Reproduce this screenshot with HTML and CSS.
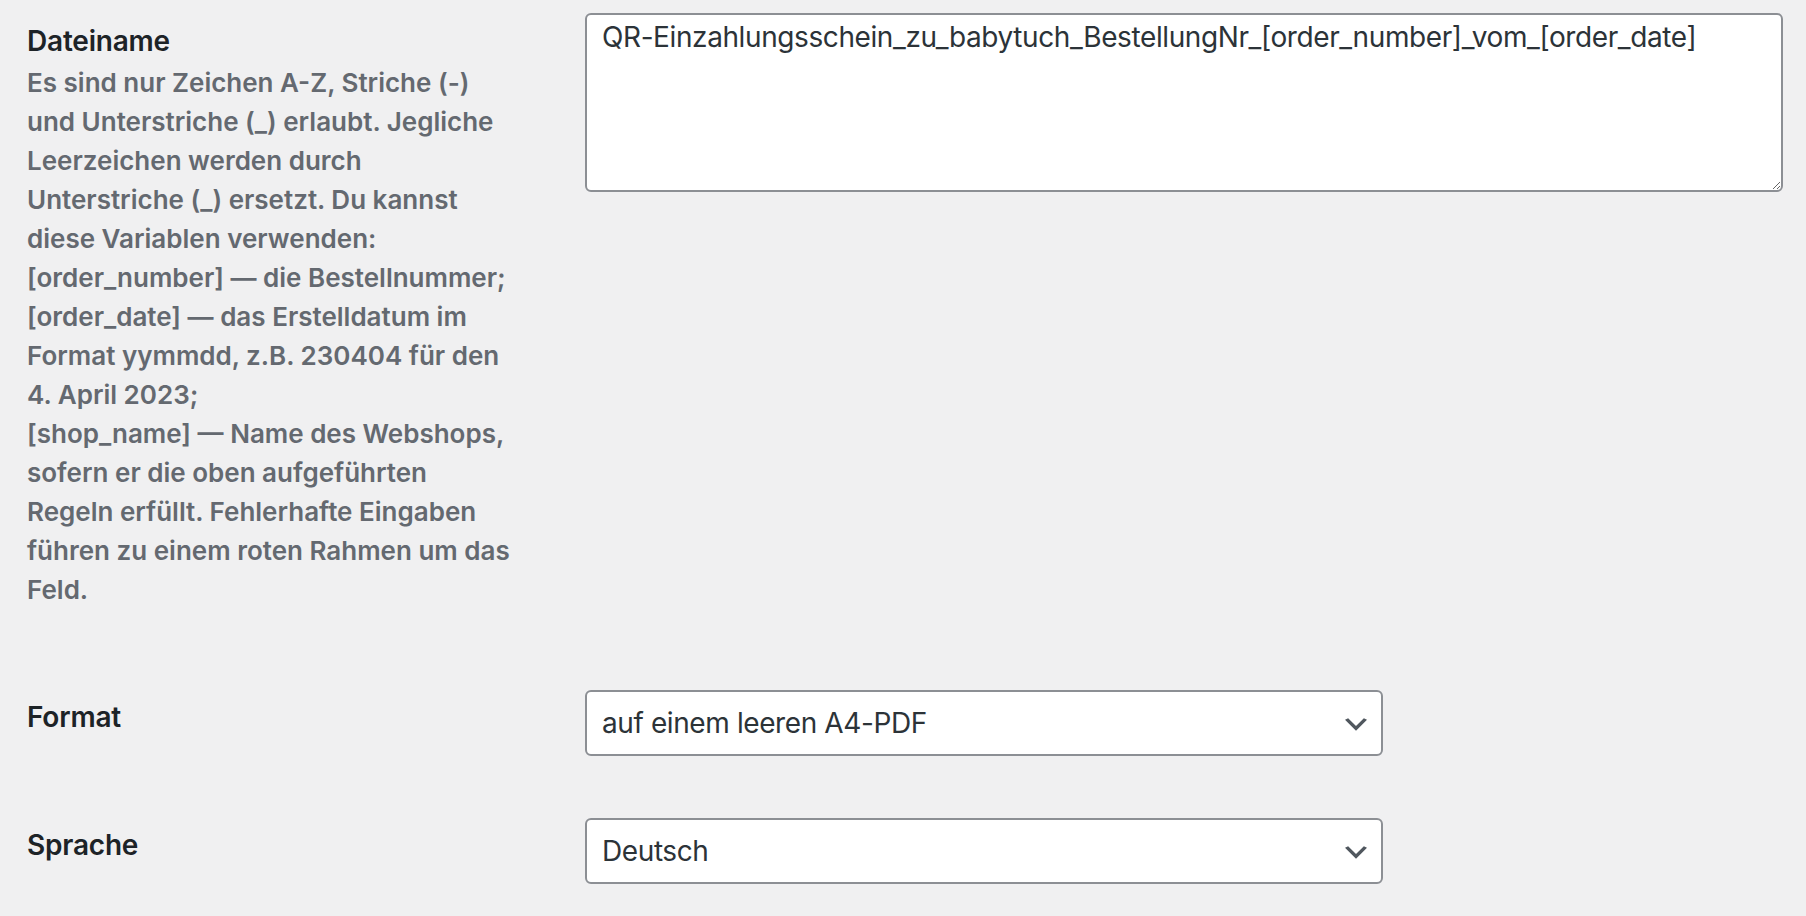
FILE: index.html
```html
<!DOCTYPE html>
<html lang="de">
<head>
<meta charset="utf-8">
<title>Einstellungen</title>
<link rel="stylesheet" href="styles.css">
</head>
<body>
<form class="settings">
  <div class="row row-first">
    <div class="row-label">
      <label class="field-label" for="filename">Dateiname</label>
      <p class="description">Es sind nur Zeichen A-Z, Striche (-)<br>und Unterstriche (_) erlaubt. Jegliche<br>Leerzeichen werden durch<br>Unterstriche (_) ersetzt. Du kannst<br>diese Variablen verwenden:<br>[order_number] — die Bestellnummer;<br>[order_date] — das Erstelldatum im<br>Format yymmdd, z.B. 230404 für den<br>4. April 2023;<br>[shop_name] — Name des Webshops,<br>sofern er die oben aufgeführten<br>Regeln erfüllt. Fehlerhafte Eingaben<br>führen zu einem roten Rahmen um das<br>Feld.</p>
    </div>
    <div class="row-control">
      <textarea id="filename" class="text-area">QR-Einzahlungsschein_zu_babytuch_BestellungNr_[order_number]_vom_[order_date]</textarea>
    </div>
  </div>

  <div class="row row-format">
    <div class="row-label">
      <label class="field-label" for="format">Format</label>
    </div>
    <div class="row-control">
      <div class="select-wrap">
        <select id="format" class="select">
          <option>auf einem leeren A4-PDF</option>
        </select>
        <svg class="chevron" viewBox="3 6 14 8" width="22" height="13" aria-hidden="true"><path d="M5 6l5 5 5-5 2 1-7 7-7-7 2-1z"/></svg>
      </div>
    </div>
  </div>

  <div class="row row-lang">
    <div class="row-label">
      <label class="field-label" for="lang">Sprache</label>
    </div>
    <div class="row-control">
      <div class="select-wrap">
        <select id="lang" class="select">
          <option>Deutsch</option>
        </select>
        <svg class="chevron" viewBox="3 6 14 8" width="22" height="13" aria-hidden="true"><path d="M5 6l5 5 5-5 2 1-7 7-7-7 2-1z"/></svg>
      </div>
    </div>
  </div>
</form>
</body>
</html>
```

FILE: styles.css
```css
html, body {
  margin: 0;
  padding: 0;
  background: #f0f0f1;
}

body {
  font-family: Inter, "Noto Sans", "Liberation Sans", sans-serif;
  color: #1d2327;
}

.settings {
  display: flex;
  flex-direction: column;
  padding: 0 23px 0 27px;
}

.row {
  display: grid;
  grid-template-columns: 558px 1fr;
  align-items: start;
}

.row-first { margin-top: 13px; }
.row-format { margin-top: 81px; }
.row-lang { margin-top: 62px; }

.row-label {
  padding-top: 9.5px;
}

.field-label {
  display: block;
  font-size: 28px;
  line-height: 36px;
  font-weight: 600;
  letter-spacing: -0.2px;
  color: #1d2327;
}

.description {
  margin: 4px 0 0;
  font-size: 26px;
  line-height: 39px;
  font-weight: 600;
  color: #646970;
  white-space: nowrap;
}

.text-area {
  display: block;
  box-sizing: border-box;
  width: 100%;
  height: 179px;
  margin: 0;
  padding: 1.5px 15px 0;
  border: 2px solid #8c8f94;
  border-radius: 6px;
  background: #fff;
  font-family: inherit;
  font-size: 28px;
  line-height: 40px;
  letter-spacing: -0.4px;
  color: #2c3338;
  resize: vertical;
}

.select-wrap {
  position: relative;
  width: 798px;
}

.select {
  display: block;
  box-sizing: border-box;
  width: 100%;
  height: 66px;
  margin: 0;
  padding: 0 60px 0 15px;
  border: 2px solid #8c8f94;
  border-radius: 6px;
  background: #fff;
  font-family: inherit;
  font-size: 28px;
  letter-spacing: -0.4px;
  color: #2c3338;
  appearance: none;
  -webkit-appearance: none;
}

.chevron {
  position: absolute;
  right: 16px;
  top: 28px;
  fill: #50575e;
  pointer-events: none;
}
```
